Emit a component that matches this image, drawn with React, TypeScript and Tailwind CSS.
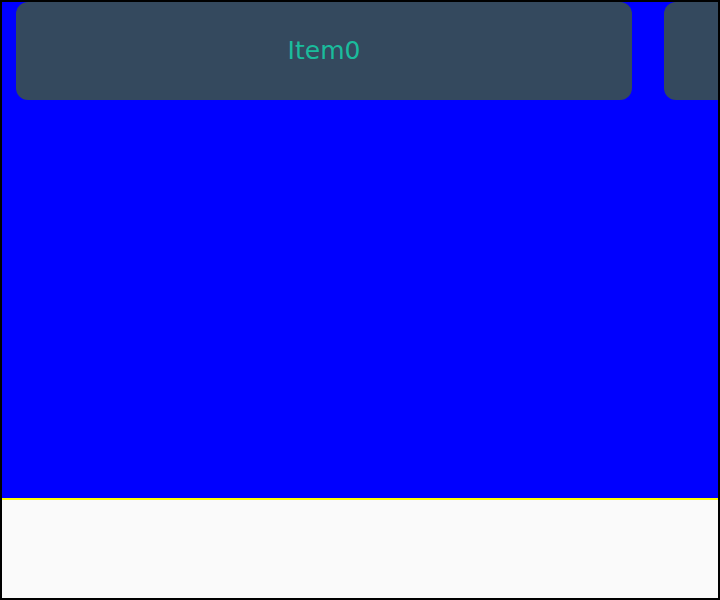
const items = ['Item0', 'Item1', 'Item2']

export default function App() {
	return (
		<div
			className="w-[720px] h-[600px] border-2 border-black flex flex-col overflow-hidden"
			style={{ fontFamily: '"DejaVu Sans", sans-serif' }}
		>
			<div className="h-[498px] shrink-0 bg-[#0000ff] border-b-2 border-[#ffff00] overflow-hidden">
				<div className="flex gap-8 pl-[14px]">
					{items.map((item) => (
						<div
							key={item}
							className="w-[616px] h-[98px] shrink-0 rounded-xl bg-[#34495e] flex items-center justify-center"
						>
							<span className="text-[25px] text-[#1abc9c]">{item}</span>
						</div>
					))}
				</div>
			</div>
			<div className="flex-1 bg-[#fafafa]" />
		</div>
	)
}
